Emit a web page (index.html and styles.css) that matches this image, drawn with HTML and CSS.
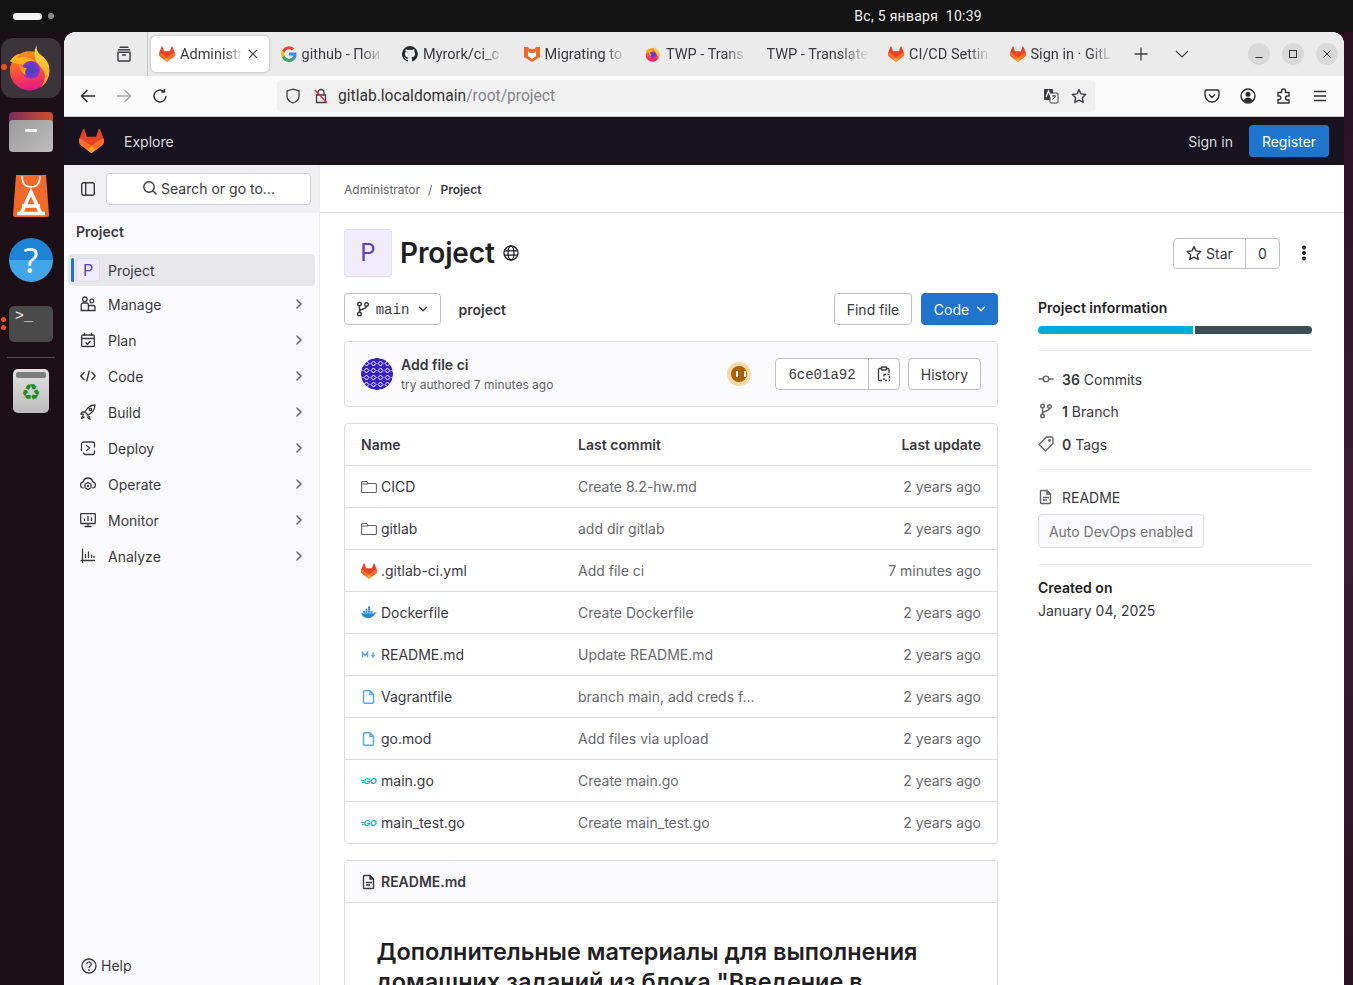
FILE: index.html
```html
<!DOCTYPE html>
<html lang="en">
<head>
<meta charset="utf-8">
<title>Project</title>
<link rel="stylesheet" href="styles.css">
</head>
<body>
<svg class="defs" aria-hidden="true">
  <symbol id="tanuki" viewBox="0 0 25 24">
    <path fill="#E24329" d="m24.507 9.5-.034-.09L21.082.562a.896.896 0 0 0-1.694.091l-2.29 7.01H7.825L5.535.653a.898.898 0 0 0-1.694-.09L.451 9.411.416 9.5a6.297 6.297 0 0 0 2.09 7.278l.012.01.03.022 5.16 3.867 2.56 1.935 1.554 1.176a1.051 1.051 0 0 0 1.268 0l1.555-1.176 2.56-1.935 5.197-3.89.014-.01A6.297 6.297 0 0 0 24.507 9.5Z"/>
    <path fill="#FC6D26" d="m24.507 9.5-.034-.09a11.44 11.44 0 0 0-4.56 2.051l-7.447 5.632 4.742 3.584 5.197-3.89.014-.01A6.297 6.297 0 0 0 24.507 9.5Z"/>
    <path fill="#FCA326" d="m7.707 20.677 2.56 1.935 1.555 1.176a1.051 1.051 0 0 0 1.268 0l1.555-1.176 2.56-1.935-4.743-3.584-4.755 3.584Z"/>
    <path fill="#FC6D26" d="M5.01 11.461a11.43 11.43 0 0 0-4.56-2.05L.416 9.5a6.297 6.297 0 0 0 2.09 7.278l.012.01.03.022 5.16 3.867 4.745-3.584-7.444-5.632Z"/>
  </symbol>
  <symbol id="firefox" viewBox="0 0 48 48">
    <linearGradient id="ffring" x1="0.35" y1="0" x2="0.55" y2="1"><stop offset="0" stop-color="#FF9416"/><stop offset=".5" stop-color="#FF4F3A"/><stop offset="1" stop-color="#E3148A"/></linearGradient>
    <linearGradient id="ffflame" x1="0.5" y1="0" x2="0.5" y2="1"><stop offset="0" stop-color="#FFE14A"/><stop offset="1" stop-color="#FF9A1F"/></linearGradient>
    <radialGradient id="ffcore"><stop offset="0" stop-color="#4840BC"/><stop offset=".7" stop-color="#6A3BC6"/><stop offset="1" stop-color="#A32FC0"/></radialGradient>
    <circle cx="22.500" cy="27" r="20.500" fill="url(#ffring)"/>
    <path fill="url(#ffflame)" d="M30 0c-1 6 2 9 6 12 6 5 8 10 7 18-1 6-4 11-9 14 4-5 6-11 3-17-3-5-8-8-9-14-1-5 0-9 2-13z"/>
    <path fill="#FFB11F" d="M2 17c2-4 6-7 10-8l-2 5c3-1 7-2 11-1 3 1 6 3 8 5-6-1-11 0-14 3-4-1-9-2-13-4z"/>
    <circle cx="24" cy="26" r="9.500" fill="url(#ffcore)"/>
    <path fill="#FF9A1F" d="M12 18c1 5 4 6 8 6-2 2-3 5-1 8-5-3-8-8-7-14z"/>
  </symbol>
  <symbol id="file-blue" viewBox="0 0 16 16"><path fill="none" stroke="#5aa9f0" stroke-width="1.500" d="M3.500 1.750h5.500l3.500 3.500v8a1 1 0 0 1-1 1h-8a1 1 0 0 1-1-1v-10.500a1 1 0 0 1 1-1zM9 1.750v3.500h3.500"/></symbol>
  <symbol id="folder" viewBox="0 0 16 16"><path fill="none" stroke="currentColor" stroke-width="1.100" d="M.6 3.500a1 1 0 0 1 1-1h4l1.500 2h7.300a1 1 0 0 1 1 1v7a1 1 0 0 1-1 1H1.600a1 1 0 0 1-1-1zM.6 5h6.500"/></symbol>
  <symbol id="chev" viewBox="0 0 16 16"><path fill="none" stroke="currentColor" stroke-width="1.500" stroke-linecap="round" stroke-linejoin="round" d="m6 4 4 4-4 4"/></symbol>
  <symbol id="chevd" viewBox="0 0 16 16"><path fill="none" stroke="currentColor" stroke-width="1.500" stroke-linecap="round" stroke-linejoin="round" d="m4 6 4 4 4-4"/></symbol>
  <symbol id="branch" viewBox="0 0 16 16"><g fill="none" stroke="currentColor" stroke-width="1.400"><circle cx="4.500" cy="3" r="1.800"/><circle cx="4.500" cy="13" r="1.800"/><circle cx="11.500" cy="3.500" r="1.800"/><path d="M4.500 5v6M11.500 5.500c0 3-7 2-7 5"/></g></symbol>
  <symbol id="doc" viewBox="0 0 16 16"><path fill="none" stroke="currentColor" stroke-width="1.400" d="M3.500 1.500h5.500l3.500 3.500v8.500a1 1 0 0 1-1 1h-8a1 1 0 0 1-1-1v-11a1 1 0 0 1 1-1zM9 1.500V5h3.500M5 8.500h6M5 11h4"/></symbol>
  <symbol id="star" viewBox="0 0 16 16"><path fill="none" stroke="currentColor" stroke-width="1.400" stroke-linejoin="round" d="m8 1.600 2 4.300 4.700.6-3.400 3.200.9 4.700L8 12.100l-4.200 2.300.9-4.700L1.300 6.500 6 5.900z"/></symbol>
</svg>

<header class="topbar">
  <span class="pill"></span><span class="dot"></span>
  <span class="clock">Вс, 5 января&nbsp;&nbsp;10:39</span>
</header>

<nav class="dock">
  <div class="dock-item active-app">
    <span class="run-dot"></span>
    <svg class="dock-ff"><use href="#firefox"/></svg>
  </div>
  <div class="dock-item">
    <div class="dock-folder"><span class="folder-tab"></span><span class="folder-front"><span class="folder-slot"></span></span></div>
  </div>
  <div class="dock-item">
    <svg class="dock-store" viewBox="0 0 36 42">
      <path fill="#F0692A" d="M3 0h30l3 40a2 2 0 0 1-2 2H2a2 2 0 0 1-2-2z"/>
      <path fill="none" stroke="#fff" stroke-width="1.600" d="M9 1c0 8 4 11 9 11s9-3 9-11"/>
      <path fill="none" stroke="#fff" stroke-width="3.600" d="M8 39 18 17l10 22M9 31h18M4 38.500h28"/>
    </svg>
  </div>
  <div class="dock-item"><span class="dock-help">?</span></div>
  <div class="dock-item">
    <span class="run-dots"><span class="run-dot-s"></span><span class="run-dot-s"></span></span>
    <span class="dock-term">&gt;_</span>
  </div>
  <div class="dock-sep"></div>
  <div class="dock-item">
    <div class="dock-trash"><span class="trash-lid"></span><span class="trash-sym">♻</span></div>
  </div>
</nav>

<div class="window">
  <div class="tabbar">
    <span class="view-btn">
      <svg class="i16" viewBox="0 0 16 16"><path fill="none" stroke="#3d3d42" stroke-width="1.400" d="M3.500 1.200h9M1.800 3.700h12.400M2 6.200h12v8.200a.6.6 0 0 1-.6.6H2.600a.6.6 0 0 1-.6-.6zM6 9h4"/></svg>
    </span>
    <span class="tab-sep"></span>
    <div class="tab tab-active">
      <svg class="i16"><use href="#tanuki"/></svg>
      <span class="tab-label tab-label-short">Administr</span>
      <svg class="tab-close" viewBox="0 0 10 10"><path stroke="#444" stroke-width="1.100" d="m1 1 8 8M9 1 1 9"/></svg>
    </div>
    <div class="tab">
      <svg class="i16" viewBox="0 0 16 16"><path fill="#4285F4" d="M15.500 8.200c0-.6 0-1.100-.1-1.600H8v3h4.300c-.2 1-.7 1.800-1.600 2.400v2h2.500c1.500-1.400 2.300-3.400 2.300-5.800z"/><path fill="#34A853" d="M8 16c2.100 0 3.900-.7 5.200-1.900l-2.500-2c-.7.500-1.600.8-2.700.8-2.100 0-3.800-1.400-4.500-3.300H1v2C2.400 14.300 5 16 8 16z"/><path fill="#FBBC05" d="M3.500 9.600c-.3-1-.3-2.100 0-3.200v-2H1a8 8 0 0 0 0 7.200z"/><path fill="#EA4335" d="M8 3.200c1.200 0 2.200.4 3 1.200l2.200-2.200A8 8 0 0 0 1 4.400l2.500 2C4.200 4.500 5.900 3.200 8 3.200z"/></svg>
      <span class="tab-label">github - Пои</span>
    </div>
    <div class="tab">
      <svg class="i16" viewBox="0 0 16 16"><path fill="#24292f" d="M8 0a8 8 0 0 0-2.500 15.600c.4.100.5-.2.500-.4v-1.400c-2.200.5-2.700-1-2.700-1-.4-.9-.9-1.200-.9-1.200-.7-.5.100-.5.100-.5.800.1 1.200.8 1.200.8.700 1.200 1.900.9 2.300.7.100-.5.300-.9.500-1.100-1.800-.2-3.600-.9-3.600-4 0-.9.300-1.600.8-2.100-.1-.2-.4-1 .1-2.100 0 0 .7-.2 2.200.8a7.600 7.600 0 0 1 4 0c1.500-1 2.200-.8 2.200-.8.400 1.100.2 1.900.1 2.100.5.600.8 1.300.8 2.100 0 3.100-1.900 3.700-3.700 3.900.3.300.6.800.6 1.500v2.200c0 .2.100.5.600.4A8 8 0 0 0 8 0z"/></svg>
      <span class="tab-label">Myrork/ci_c</span>
    </div>
    <div class="tab">
      <svg class="i16" viewBox="0 0 16 16"><path fill="#F0692A" d="M0 1h4l1.500 2h5L12 1h4v10l-8 5-8-5z"/><path fill="#fff" d="M4 5l2 2h4l2-2v5l-4 3-4-3z"/></svg>
      <span class="tab-label">Migrating to</span>
    </div>
    <div class="tab">
      <svg class="i16"><use href="#firefox"/></svg>
      <span class="tab-label">TWP - Trans</span>
    </div>
    <div class="tab">
      <span class="tab-label tab-label-wide">TWP - Translate</span>
    </div>
    <div class="tab">
      <svg class="i16"><use href="#tanuki"/></svg>
      <span class="tab-label">CI/CD Settin</span>
    </div>
    <div class="tab">
      <svg class="i16"><use href="#tanuki"/></svg>
      <span class="tab-label">Sign in · GitL</span>
    </div>
    <span class="tb-btn tb-plus"><svg class="i16" viewBox="0 0 16 16"><path stroke="#3d3d42" stroke-width="1.300" d="M8 1.500v13M1.500 8h13"/></svg></span>
    <span class="tb-btn tb-chevron"><svg class="i16" viewBox="0 0 16 16"><path fill="none" stroke="#3d3d42" stroke-width="1.200" d="m2 5 6 6 6-6"/></svg></span>
    <div class="win-btns">
      <span class="win-btn"><svg class="i10" viewBox="0 0 10 10"><path stroke="#333" stroke-width="1" d="M1.500 8.500h7"/></svg></span>
      <span class="win-btn"><svg class="i10" viewBox="0 0 10 10"><rect x="1.500" y="1.500" width="7" height="7" fill="none" stroke="#333" stroke-width="1"/></svg></span>
      <span class="win-btn"><svg class="i10" viewBox="0 0 10 10"><path stroke="#333" stroke-width="1" d="m1.500 1.500 7 7M8.500 1.500l-7 7"/></svg></span>
    </div>
  </div>

  <div class="navbar">
    <span class="nav-btn"><svg class="i16" viewBox="0 0 16 16"><path fill="none" stroke="#2f2f33" stroke-width="1.400" d="M15 8H1.500M7.500 2 1.500 8l6 6"/></svg></span>
    <span class="nav-btn"><svg class="i16" viewBox="0 0 16 16"><path fill="none" stroke="#a8a8ad" stroke-width="1.400" d="M1 8h13.500M8.500 2l6 6-6 6"/></svg></span>
    <span class="nav-btn"><svg class="i16" viewBox="0 0 16 16"><path fill="none" stroke="#2f2f33" stroke-width="1.400" d="M14 8a6 6 0 1 1-2-4.500M12.500 .8v3.200H9.300"/></svg></span>
    <div class="urlbar">
      <svg class="i16" viewBox="0 0 16 16"><path fill="none" stroke="#3d3d42" stroke-width="1.300" d="M8 1.200 14 3v5c0 3.500-2.500 5.800-6 7-3.500-1.200-6-3.500-6-7V3z"/></svg>
      <svg class="i16" viewBox="0 0 16 16"><path fill="none" stroke="#3d3d42" stroke-width="1.300" d="M3.500 7h9v7.500h-9zM5 7V4.500a3 3 0 0 1 6 0V7"/><path stroke="#e22850" stroke-width="1.500" d="m2 2 12 13"/></svg>
      <span class="url"><span class="url-host">gitlab.localdomain</span>/root/project</span>
      <svg class="i16 url-end" viewBox="0 0 16 16"><rect x="1" y="1" width="9" height="11" rx="1" fill="#3d3d42"/><rect x="7" y="5" width="8" height="10" rx="1" fill="#fff" stroke="#3d3d42"/><path stroke="#fff" stroke-width="1.200" fill="none" d="m3 9 2.500-6L8 9"/><path stroke="#3d3d42" fill="none" d="M9 8h4M11 7v1M12.500 8c-.5 2-2 3-3.500 3.500"/></svg>
      <svg class="i16 url-star"><use href="#star"/></svg>
    </div>
    <div class="nav-right">
      <span class="nav-btn"><svg class="i16" viewBox="0 0 16 16"><path fill="none" stroke="#2f2f33" stroke-width="1.400" d="M2.500 2h11A1.500 1.500 0 0 1 15 3.500V7a7 7 0 0 1-14 0V3.500A1.500 1.500 0 0 1 2.500 2zM5 6.500l3 3 3-3"/></svg></span>
      <span class="nav-btn"><svg class="i16" viewBox="0 0 16 16"><circle cx="8" cy="8" r="7" fill="none" stroke="#2f2f33" stroke-width="1.400"/><circle cx="8" cy="6.200" r="2.500" fill="#2f2f33"/><path fill="#2f2f33" d="M3.500 12.500c1-2 2.800-3 4.500-3s3.500 1 4.500 3A6 6 0 0 1 8 14.500a6 6 0 0 1-4.500-2z"/></svg></span>
      <span class="nav-btn"><svg class="i16" viewBox="0 0 16 16"><path fill="none" stroke="#2f2f33" stroke-width="1.400" d="M2 4.500h3.500V3a2 2 0 0 1 4 0v1.500H13V8h-1.500a2 2 0 0 0 0 4H13v3H2v-3.500h1.500a1.800 1.800 0 0 0 0-3.500H2z"/></svg></span>
      <span class="nav-btn"><svg class="i16" viewBox="0 0 16 16"><path stroke="#2f2f33" stroke-width="1.300" d="M2 3.500h12M2 8h12M2 12.500h12"/></svg></span>
    </div>
  </div>

  <div class="gl-header">
    <svg class="gl-logo"><use href="#tanuki"/></svg>
    <span class="gl-explore">Explore</span>
    <span class="gl-signin">Sign in</span>
    <span class="gl-register">Register</span>
  </div>

  <div class="gl-body">
    <aside class="sidebar">
      <div class="side-search">
        <svg class="i16 c-dark" viewBox="0 0 16 16"><rect x="1.700" y="1.700" width="12.600" height="12.600" rx="2" fill="none" stroke="currentColor" stroke-width="1.400"/><path stroke="currentColor" stroke-width="1.400" d="M5.700 2v12"/></svg>
        <div class="search-box">
          <svg class="i16 c-dark" viewBox="0 0 16 16"><circle cx="7" cy="7" r="5.200" fill="none" stroke="currentColor" stroke-width="1.400"/><path stroke="currentColor" stroke-width="1.400" d="m11 11 3.500 3.500"/></svg>
          <span>Search or go to...</span>
        </div>
      </div>
      <div class="side-title">Project</div>
      <ul class="side-list">
        <li class="side-item side-active"><span class="side-avatar">P</span><span>Project</span></li>
        <li class="side-item">
          <svg class="i16" viewBox="0 0 16 16"><g fill="none" stroke="currentColor" stroke-width="1.300"><circle cx="4.800" cy="3.300" r="2.300"/><circle cx="11.800" cy="5" r="1.900"/><path d="M1.200 14.500V9a2 2 0 0 1 2-2h3.200a2 2 0 0 1 2 2v5.500zM8.400 9.500h5.100a1.500 1.500 0 0 1 1.500 1.500v3.500H8.400"/></g></svg>
          <span>Manage</span><svg class="side-chev"><use href="#chev"/></svg>
        </li>
        <li class="side-item">
          <svg class="i16" viewBox="0 0 16 16"><g fill="none" stroke="currentColor" stroke-width="1.300"><rect x="1.700" y="3" width="12.600" height="11.500" rx="1"/><path d="M1.700 6.500h12.600M4.500 .8v3.200M11.500 .8v3.200M5.500 10.500l2 1.800 3-3.300"/></g></svg>
          <span>Plan</span><svg class="side-chev"><use href="#chev"/></svg>
        </li>
        <li class="side-item">
          <svg class="i16" viewBox="0 0 16 16"><path fill="none" stroke="currentColor" stroke-width="1.400" stroke-linejoin="round" d="M4.500 4 .8 8l3.700 4M11.500 4l3.700 4-3.700 4M9.500 2.500l-3 11"/></svg>
          <span>Code</span><svg class="side-chev"><use href="#chev"/></svg>
        </li>
        <li class="side-item">
          <svg class="i16" viewBox="0 0 16 16"><g fill="none" stroke="currentColor" stroke-width="1.300" stroke-linejoin="round"><path d="M15 1c-5 .2-8 3-10 7l3 3c4-2 6.800-5 7-10zM5 8H2L.8 10l3.200.5M8 11v3l2 1.200-.5-3.200"/><circle cx="10.500" cy="5.500" r="1.200"/><path d="M3.500 11.500C2 12.500 1.500 14 1.500 14.500s2-.5 3-2"/></g></svg>
          <span>Build</span><svg class="side-chev"><use href="#chev"/></svg>
        </li>
        <li class="side-item">
          <svg class="i16" viewBox="0 0 16 16"><g fill="none" stroke="currentColor" stroke-width="1.300" stroke-linecap="round" stroke-linejoin="round"><path d="M1.500 10.500V4a2 2 0 0 1 2-2h9a2 2 0 0 1 2 2v3M14.500 11v1.500a2 2 0 0 1-2 2H5.500a2 2 0 0 1-2-1.500"/><path d="m6.500 5.500 3 2.500-3 2.500"/></g></svg>
          <span>Deploy</span><svg class="side-chev"><use href="#chev"/></svg>
        </li>
        <li class="side-item">
          <svg class="i16" viewBox="0 0 16 16"><g fill="none" stroke="currentColor" stroke-width="1.300" stroke-linejoin="round"><path d="M3.500 12C1 12 .5 10 .5 9c0-1.500 1-2.500 2.500-2.800C3.500 3.500 5.500 2 8 2s4.500 1.500 5 4.200C14.500 6.500 15.500 7.500 15.500 9c0 1-.5 3-3 3"/><path d="m8 6.500 3 1.800v3.400L8 13.500l-3-1.800V8.300z"/></g><circle cx="8" cy="10" r="1.200" fill="currentColor"/></svg>
          <span>Operate</span><svg class="side-chev"><use href="#chev"/></svg>
        </li>
        <li class="side-item">
          <svg class="i16" viewBox="0 0 16 16"><g fill="none" stroke="currentColor" stroke-width="1.300"><rect x=".7" y="1.700" width="14.600" height="9.800" rx=".5"/><path d="M8 11.500v3M4.500 14.500h7M4.500 9V6.500M8 9V4M11.500 9V5.500"/></g></svg>
          <span>Monitor</span><svg class="side-chev"><use href="#chev"/></svg>
        </li>
        <li class="side-item">
          <svg class="i16" viewBox="0 0 16 16"><path fill="none" stroke="currentColor" stroke-width="1.300" d="M2.500 .8V15M.5 12.500H15M5.500 10V6M8.500 10V3.500M11.500 10V6.500M14 10V8"/></svg>
          <span>Analyze</span><svg class="side-chev"><use href="#chev"/></svg>
        </li>
      </ul>
      <div class="side-help">
        <svg class="i16 c-dark" viewBox="0 0 16 16"><circle cx="8" cy="8" r="7" fill="none" stroke="currentColor" stroke-width="1.300"/><path fill="none" stroke="currentColor" stroke-width="1.300" d="M5.800 6.200a2.200 2.200 0 1 1 3.400 1.800C8.300 8.600 8 9 8 10"/><circle cx="8" cy="12" r=".9" fill="currentColor"/></svg>
        <span>Help</span>
      </div>
    </aside>

    <main class="main">
      <div class="crumbs"><span>Administrator</span><span class="crumb-sep">/</span><span class="crumb-cur">Project</span></div>
      <div class="content">
        <div class="proj-head">
          <span class="proj-avatar">P</span>
          <h1 class="proj-title">Project</h1>
          <svg class="i16 c-title" viewBox="0 0 16 16"><g fill="none" stroke="currentColor" stroke-width="1.300"><circle cx="8" cy="8" r="7"/><ellipse cx="8" cy="8" rx="3" ry="7"/><path d="M1.200 5.800h13.600M1.200 10.200h13.600"/></g></svg>
          <div class="star-group">
            <span class="star-btn"><svg class="i16 c-dark"><use href="#star"/></svg>Star</span>
            <span class="star-count">0</span>
          </div>
          <svg class="kebab" viewBox="0 0 16 16"><circle cx="8" cy="2.500" r="2" fill="#1f1e24"/><circle cx="8" cy="8" r="2" fill="#1f1e24"/><circle cx="8" cy="13.500" r="2" fill="#1f1e24"/></svg>
        </div>

        <div class="columns">
          <div class="col-left">
            <div class="ref-row">
              <span class="btn branch-btn"><svg class="i16 c-dark"><use href="#branch"/></svg><span class="mono">main</span><svg class="i16 c-dark small-chev"><use href="#chevd"/></svg></span>
              <strong class="ref-name">project</strong>
              <span class="btn find-btn">Find file</span>
              <span class="btn code-btn">Code<svg class="i16 small-chev"><use href="#chevd"/></svg></span>
            </div>

            <div class="commit-box">
              <svg class="commit-avatar" viewBox="0 0 32 32">
                <defs><pattern id="identicon" x="2" y="2" width="7" height="7" patternUnits="userSpaceOnUse"><rect width="7" height="7" fill="#3a1fbf"/><path d="M3.500 1 6 3.500 3.500 6 1 3.500z" fill="none" stroke="#fff" stroke-width="1"/><circle cx="3.500" cy="3.500" r=".7" fill="#3a1fbf"/></pattern></defs>
                <circle cx="16" cy="16" r="16" fill="url(#identicon)"/>
              </svg>
              <div class="commit-text">
                <div class="commit-title">Add file ci</div>
                <div class="commit-sub">try authored 7 minutes ago</div>
              </div>
              <span class="status"><span class="status-bars"></span></span>
              <div class="sha-group">
                <span class="sha mono">6ce01a92</span>
                <span class="sha-copy"><svg class="i16 c-dark" viewBox="0 0 16 16"><g fill="none" stroke="currentColor" stroke-width="1.300"><path d="M5 2.500H3.500a1 1 0 0 0-1 1v10a1 1 0 0 0 1 1H6M11 2.500h1a1 1 0 0 1 1 1V7"/><rect x="5.500" y="1" width="5" height="3" rx=".5"/><path stroke-dasharray="2 1.500" d="M8 8.500h5.500v6H8z"/></g></svg></span>
              </div>
              <span class="btn history-btn">History</span>
            </div>

            <div class="file-box">
              <table class="files">
                <colgroup><col class="col-name"><col class="col-commit"><col></colgroup>
                <thead><tr><th>Name</th><th>Last commit</th><th class="right">Last update</th></tr></thead>
                <tbody>
                  <tr><td><span class="fname"><svg class="i16 c-muted"><use href="#folder"/></svg>CICD</span></td><td class="muted">Create 8.2-hw.md</td><td class="muted right">2 years ago</td></tr>
                  <tr><td><span class="fname"><svg class="i16 c-muted"><use href="#folder"/></svg>gitlab</span></td><td class="muted">add dir gitlab</td><td class="muted right">2 years ago</td></tr>
                  <tr><td><span class="fname"><svg class="i16"><use href="#tanuki"/></svg>.gitlab-ci.yml</span></td><td class="muted">Add file ci</td><td class="muted right">7 minutes ago</td></tr>
                  <tr><td><span class="fname"><svg class="i16" viewBox="0 0 16 16"><path fill="#1f88d0" d="M.3 8.300h12c.6 0 1.200-.6 1.500-1 .6.300 1.300.3 2 .1-.5 1-1.300 1.300-2 1.400C13 11.500 10.500 13 7 13 3 13 1 11 .3 8.300z"/><path fill="#1f88d0" d="M2 6h2v1.800H2zM4.500 6h2v1.800h-2zM7 6h2v1.800H7zM9.500 6h2v1.800h-2zM4.500 3.800h2v1.800h-2zM7 3.800h2v1.800H7zM7 1.600h2v1.800H7z"/></svg>Dockerfile</span></td><td class="muted">Create Dockerfile</td><td class="muted right">2 years ago</td></tr>
                  <tr><td><span class="fname"><svg class="i16" viewBox="0 0 16 16"><path fill="none" stroke="#5aa9f0" stroke-width="1.500" d="M1.500 10.500v-5l2.500 3 2.500-3v5"/><path fill="#5aa9f0" d="M9.500 8h1.800V5.500h1.400V8h1.800L12 11z"/></svg>README.md</span></td><td class="muted">Update README.md</td><td class="muted right">2 years ago</td></tr>
                  <tr><td><span class="fname"><svg class="i16"><use href="#file-blue"/></svg>Vagrantfile</span></td><td class="muted">branch main, add creds f...</td><td class="muted right">2 years ago</td></tr>
                  <tr><td><span class="fname"><svg class="i16"><use href="#file-blue"/></svg>go.mod</span></td><td class="muted">Add files via upload</td><td class="muted right">2 years ago</td></tr>
                  <tr><td><span class="fname"><svg class="i16" viewBox="0 0 16 16"><path stroke="#00acc1" stroke-width=".9" d="M0 7.500h3M1 9.500h2"/><text class="go-text" x="2.500" y="11">GO</text></svg>main.go</span></td><td class="muted">Create main.go</td><td class="muted right">2 years ago</td></tr>
                  <tr><td><span class="fname"><svg class="i16" viewBox="0 0 16 16"><path stroke="#00acc1" stroke-width=".9" d="M0 7.500h3M1 9.500h2"/><text class="go-text" x="2.500" y="11">GO</text></svg>main_test.go</span></td><td class="muted">Create main_test.go</td><td class="muted right">2 years ago</td></tr>
                </tbody>
              </table>
            </div>

            <section class="readme">
              <div class="readme-head"><svg class="i16 c-dark"><use href="#doc"/></svg><strong>README.md</strong></div>
              <div class="readme-body">
                <h2>Дополнительные материалы для выполнения домашних заданий из блока "Введение в DevOps"</h2>
              </div>
            </section>
          </div>

          <aside class="col-right">
            <h3 class="info-title">Project information</h3>
            <div class="lang-bar"><span class="lang-a"></span><span class="lang-b"></span></div>
            <hr class="rule rule-first">
            <div class="stat stat-first"><svg class="i16 c-muted" viewBox="0 0 16 16"><g fill="none" stroke="currentColor" stroke-width="1.300"><circle cx="8" cy="8" r="2.800"/><path d="M.5 8h4.700M10.800 8h4.700"/></g></svg><span><b>36</b> Commits</span></div>
            <div class="stat"><svg class="i16 c-muted"><use href="#branch"/></svg><span><b>1</b> Branch</span></div>
            <div class="stat stat-last"><svg class="i16 c-muted" viewBox="0 0 16 16"><g fill="none" stroke="currentColor" stroke-width="1.300" stroke-linejoin="round"><path d="M15 2.500v5L7.500 15 1 8.500 8.500 1H13.500a1.500 1.500 0 0 1 1.500 1.500z"/><circle cx="11.500" cy="4.500" r=".8"/></g></svg><span><b>0</b> Tags</span></div>
            <hr class="rule rule-mid">
            <div class="stat readme-link"><svg class="i16 c-muted"><use href="#doc"/></svg><span>README</span></div>
            <span class="devops">Auto DevOps enabled</span>
            <hr class="rule rule-low">
            <div class="created-label">Created on</div>
            <div class="created-date">January 04, 2025</div>
          </aside>
        </div>
      </div>
    </main>
  </div>
</div>
<div class="wall"></div>
</body>
</html>
```
FILE: styles.css
```css
* { box-sizing: border-box; }
html, body { height: 100%; }
body {
  margin: 0;
  height: 985px;
  overflow: hidden;
  display: grid;
  grid-template-columns: 64px 1280px 9px;
  grid-template-rows: 32px 953px;
  background: #1a0d14;
  font-family: Inter, "Noto Sans", sans-serif;
  font-size: 14px;
  color: #3a383f;
}
.defs { width: 0; height: 0; position: absolute; }
.i16 { width: 16px; height: 16px; flex: none; display: block; }
.i10 { width: 10px; height: 10px; display: block; }
.c-dark { color: #3a383f; }
.c-muted { color: #626168; }
.c-title { color: #1f1e24; }
.mono { font-family: "Liberation Mono", monospace; }
.go-text { font-family: "Liberation Sans", sans-serif; font-size: 8.500px; font-weight: 700; font-style: italic; fill: #00acc1; }

/* top bar */
.topbar {
  grid-column: 1 / -1;
  background: #131313;
  display: flex;
  align-items: center;
  padding-left: 13px;
  font-family: Roboto, sans-serif;
}
.pill { width: 29px; height: 7px; border-radius: 4px; background: #f4f4f4; }
.dot { width: 6px; height: 6px; border-radius: 50%; background: #8a8a8a; margin-left: 6px; }
.clock { margin-left: auto; margin-right: 371px; color: #f0f0f0; font-size: 14px; letter-spacing: .28px; white-space: nowrap; }

/* dock */
.dock {
  background: #1c0f16;
  display: flex;
  flex-direction: column;
  align-items: center;
  padding: 6px 2px 0 0;
}
.dock-item {
  width: 60px;
  height: 60px;
  margin-bottom: 4px;
  display: flex;
  align-items: center;
  justify-content: center;
  position: relative;
  border-radius: 12px;
  flex: none;
}
.active-app { background: #3b343a; }
.dock-ff { width: 46px; height: 46px; }
.run-dot { position: absolute; left: 0; top: 26px; width: 6px; height: 6px; border-radius: 50%; background: #e95420; }
.dock-folder { width: 44px; height: 40px; position: relative; }
.folder-tab { position: absolute; left: 0; right: 0; top: 0; height: 20px; border-radius: 4px 4px 0 0; background: linear-gradient(90deg, #7a2c5c, #d0512c); }
.folder-front { position: absolute; left: 0; right: 0; top: 8px; bottom: 0; border-radius: 4px; background: linear-gradient(135deg, #9b9b9b, #bdbdbd); display: flex; justify-content: center; }
.folder-slot { width: 12px; height: 3px; background: #f2f2f2; margin-top: 9px; border-radius: 1px; }
.dock-store { width: 36px; height: 42px; }
.dock-help {
  width: 44px; height: 44px; border-radius: 50%;
  background: linear-gradient(#1d83d6 50%, #41a5e9 50%);
  color: #fff; font-family: "Noto Sans", sans-serif; font-size: 34px; line-height: 44px; text-align: center;
}
.run-dots { position: absolute; left: 0; top: 23px; display: flex; flex-direction: column; gap: 3px; }
.run-dot-s { width: 5px; height: 5px; border-radius: 50%; background: #e95420; display: block; }
.dock-term {
  width: 44px; height: 36px; border-radius: 5px; background: #4a4a4a;
  color: #fff; font-family: "Liberation Mono", monospace; font-size: 15px; line-height: 18px; padding: 2px 0 0 6px;
}
.dock-sep { width: 48px; height: 1px; background: #55494f; margin: -1px 0 3px; flex: none; }
.dock-trash {
  width: 36px; height: 44px; border-radius: 5px; background: linear-gradient(#e2e2e2, #bcbcbc);
  padding-top: 3px; display: flex; flex-direction: column; align-items: center;
}
.trash-lid { width: 30px; height: 6px; border-radius: 2px; background: #7d7d7d; }
.trash-sym { color: #228a22; font-family: "DejaVu Sans", sans-serif; font-size: 22px; line-height: 30px; }

/* window */
.window {
  background: #fff;
  border-radius: 12px 12px 0 0;
  overflow: hidden;
  display: flex;
  flex-direction: column;
  min-width: 0;
}
.wall { background: linear-gradient(#2c1020, #3d1c30 50%, #2f1222); }

.tabbar {
  height: 44px;
  background: #ebebeb;
  display: flex;
  align-items: center;
  padding-left: 44px;
  font-family: Roboto, sans-serif;
  font-size: 14.5px;
  color: #3a3a3f;
  flex: none;
}
.view-btn { width: 32px; display: flex; justify-content: center; }
.tab-sep { width: 1px; height: 44px; background: #c9c9c9; margin-left: 7px; margin-right: 1px; }
.tab {
  width: 117.5px;
  height: 36px;
  margin: 0 2px;
  padding-left: 8px;
  display: flex;
  align-items: center;
  gap: 5px;
  border-radius: 5px;
  flex: none;
}
.tab-active { background: #fff; box-shadow: 0 0 3px rgba(0, 0, 0, .3); }
.tab-label {
  width: 82px;
  overflow: hidden;
  white-space: nowrap;
  -webkit-mask-image: linear-gradient(to right, #000 72%, transparent);
  mask-image: linear-gradient(to right, #000 72%, transparent);
}
.tab-label-short { width: 63px; }
.tab-label-wide { width: 102px; }
.tab-close { width: 10px; height: 10px; flex: none; }
.tb-btn { width: 32px; display: flex; justify-content: center; }
.tb-plus { margin-left: 4px; }
.tb-chevron { margin-left: 9px; }
.win-btns { margin-left: auto; padding-right: 6px; display: flex; gap: 12px; }
.win-btn { width: 22px; height: 22px; border-radius: 50%; background: #d9d9d9; display: flex; align-items: center; justify-content: center; }

.navbar {
  height: 41px;
  flex: none;
  background: #fbfbfb;
  border-bottom: 1px solid #c9c9c9;
  display: flex;
  align-items: center;
  padding-left: 6px;
  padding-right: 6px;
}
.nav-btn { width: 36px; display: flex; justify-content: center; }
.urlbar {
  margin-left: 99px;
  width: 818px;
  height: 32px;
  border-radius: 4px;
  background: #f0f0f0;
  display: flex;
  align-items: center;
  padding: 0 8px;
  gap: 12px;
}
.url { font-family: Roboto, sans-serif; font-size: 15.6px; color: #85858a; margin-left: -3px; }
.url-host { color: #333; }
.url-end { margin-left: auto; }
.url-star { color: #3d3d42; }
.nav-right { margin-left: auto; display: flex; }

.gl-header {
  height: 48px;
  flex: none;
  background: #171321;
  color: #dcdcde;
  display: flex;
  align-items: center;
  padding: 0 15px 0 15px;
}
.gl-logo { width: 25px; height: 24px; }
.gl-explore { margin-left: 20px; }
.gl-signin { margin-left: auto; margin-right: 16px; }
.gl-register { width: 80px; height: 32px; line-height: 33px; text-align: center; background: #1f75cb; color: #fff; border-radius: 4px; }

.gl-body { flex: 1; display: flex; min-height: 0; }

/* sidebar */
.sidebar {
  width: 256px;
  flex: none;
  background: #fbfafd;
  border-right: 1px solid #ececef;
  display: flex;
  flex-direction: column;
}
.side-search {
  height: 48px;
  background: #f0f0f2;
  display: flex;
  align-items: center;
  padding: 0 8px 0 16px;
  gap: 10px;
  flex: none;
}
.search-box {
  flex: 1;
  height: 32px;
  background: #fff;
  border: 1px solid #d1d0d3;
  border-radius: 4px;
  display: flex;
  align-items: center;
  justify-content: center;
  gap: 3px;
  padding-bottom: 2px;
}
.side-title { padding: 9px 12px 12px; line-height: 20px; font-weight: 600; }
.side-list { list-style: none; margin: 0; padding: 0; }
.side-item {
  height: 36px;
  margin: 0 4px;
  padding: 0 8px 0 12px;
  display: flex;
  align-items: center;
  gap: 12px;
  border-radius: 4px;
  position: relative;
}
.side-active {
  height: 32px;
  background: #e7e6ea;
  padding-left: 8px;
  gap: 8px;
}
.side-active::before {
  content: "";
  position: absolute;
  left: 3px;
  top: 4px;
  bottom: 4px;
  width: 3px;
  border-radius: 2px;
  background: #1f75cb;
}
.side-avatar {
  width: 24px;
  height: 24px;
  border-radius: 4px;
  background: #f1ecfb;
  box-shadow: inset 0 0 0 1px #dcdae6;
  color: #5943b6;
  font-size: 16px;
  line-height: 24px;
  text-align: center;
}
.side-chev { width: 16px; height: 16px; margin-left: auto; color: #626168; }
.side-help {
  margin-top: auto;
  padding: 0 0 8px 17px;
  height: 30px;
  display: flex;
  align-items: center;
  gap: 4px;
  line-height: 20px;
}

/* main */
.main { flex: 1; min-width: 0; overflow: hidden; background: #fff; }
.crumbs {
  height: 48px;
  border-bottom: 1px solid #dcdcde;
  padding: 2px 0 0 24px;
  display: flex;
  align-items: center;
  font-size: 12px;
  color: #626168;
}
.crumb-sep { margin: 0 8px; }
.crumb-cur { font-weight: 600; color: #3a383f; }
.content { padding: 16px 32px 0 24px; }

.proj-head { height: 48px; display: flex; align-items: center; }
.proj-avatar {
  width: 48px;
  height: 48px;
  border-radius: 4px;
  background: #f1ecfb;
  box-shadow: inset 0 0 0 1px #e4e1ee;
  color: #5943b6;
  font-size: 24px;
  line-height: 48px;
  text-align: center;
}
.proj-title { margin: 0 8px; font-size: 28px; font-weight: 600; color: #1f1e24; letter-spacing: -.15px; }
.star-group { margin-left: auto; display: flex; height: 31px; border: 1px solid #bfbfc3; border-radius: 4px; }
.star-btn { width: 72px; display: flex; align-items: center; justify-content: center; gap: 4px; border-right: 1px solid #bfbfc3; }
.star-count { width: 33px; text-align: center; line-height: 30px; }
.kebab { width: 16px; height: 16px; margin-left: 16px; }

.columns { display: grid; grid-template-columns: 654px 274px; column-gap: 40px; margin-top: 16px; }
.col-left, .col-right { min-width: 0; }

.ref-row { display: flex; align-items: center; height: 32px; }
.btn {
  height: 32px;
  border: 1px solid #bfbfc3;
  border-radius: 4px;
  display: inline-flex;
  align-items: center;
  justify-content: center;
  background: #fff;
}
.branch-btn { width: 97px; gap: 4px; }
.branch-btn .mono { margin-left: 1px; padding-top: 2px; }
.small-chev { width: 14px; height: 14px; margin-left: 3px; }
.ref-name { margin-left: 17.5px; font-weight: 600; }
.find-btn { width: 78px; margin-left: auto; }
.code-btn { width: 77px; margin-left: 9px; padding-left: 3px; background: #1f75cb; border-color: #1f75cb; color: #fff; gap: 2px; }

.commit-box {
  margin-top: 16px;
  height: 66px;
  background: #fbfafd;
  border: 1px solid #dcdcde;
  border-radius: 4px;
  padding: 0 16px;
  display: flex;
  align-items: center;
}
.commit-avatar { width: 32px; height: 32px; flex: none; }
.commit-text { margin-left: 8px; padding-top: 2px; }
.commit-title { font-weight: 600; line-height: 18px; }
.commit-sub { font-size: 12px; color: #626168; line-height: 18px; margin-top: 2px; }
.status {
  margin-left: auto;
  width: 24px;
  height: 24px;
  border-radius: 50%;
  background: #f5d9a8;
  display: flex;
  align-items: center;
  justify-content: center;
}
.status-bars { width: 16px; height: 16px; border-radius: 50%; background: #ab6100; position: relative; }
.status-bars::before {
  content: "";
  position: absolute;
  left: 5px; top: 5px;
  width: 6px; height: 6px;
  border-left: 2px solid #fff;
  border-right: 2px solid #fff;
}
.sha-group { margin-left: 24px; height: 32px; display: flex; border: 1px solid #bfbfc3; border-radius: 4px; background: #fff; }
.sha { width: 93px; border-right: 1px solid #bfbfc3; text-align: center; line-height: 32px; }
.sha-copy { width: 30px; display: flex; align-items: center; justify-content: center; }
.history-btn { width: 73px; margin-left: 8px; }

.file-box { margin-top: 16px; border: 1px solid #dcdcde; border-radius: 4px; overflow: hidden; }
.files { width: 652px; table-layout: fixed; border-collapse: separate; border-spacing: 0; }
.col-name { width: 217px; }
.col-commit { width: 270px; }
.files th, .files td { height: 42px; padding: 0 16px; border-bottom: 1px solid #dcdcde; text-align: left; white-space: nowrap; }
.files th { font-weight: 600; letter-spacing: .03px; }
.files tr:last-child td { border-bottom: 0; height: 41px; }
.files .right { text-align: right; }
.muted { color: #68676e; }
.fname { display: flex; align-items: center; gap: 4px; color: #3a383f; }

.readme { margin-top: 16px; border: 1px solid #dcdcde; border-bottom: 0; border-radius: 4px 4px 0 0; }
.readme-head {
  height: 42px;
  background: #fbfafd;
  border-bottom: 1px solid #dcdcde;
  display: flex;
  align-items: center;
  gap: 4px;
  padding-left: 16px;
}
.readme-head strong { font-weight: 600; }
.readme-body { padding: 34px 32px 32px 31.5px; }
.readme-body h2 { margin: 0; font-size: 23.45px; line-height: 30px; font-weight: 600; color: #1f1e24; }

.info-title { margin: 5px 0 0; font-size: 14px; line-height: 20px; font-weight: 600; color: #1f1e24; }
.lang-bar { margin-top: 8px; height: 8px; display: flex; gap: 2px; border-radius: 4px; overflow: hidden; }
.lang-a { width: 155px; background: #00acd8; }
.lang-b { flex: 1; background: #3b4e56; }
.rule { border: 0; border-top: 1px solid #ececef; margin: 0; }
.rule-first { margin-top: 16px; }
.rule-mid { margin-top: 9px; }
.rule-low { margin-top: 16px; }
.stat { height: 32px; display: flex; align-items: center; gap: 8px; }
.stat b { font-weight: 600; }
.stat-first { margin-top: 12px; }
.stat-last { margin-top: 1px; }
.readme-link { height: 20px; margin-top: 17px; }
.devops {
  display: block;
  width: 166px;
  height: 34px;
  margin-top: 7px;
  border: 1px solid #dcdcde;
  border-radius: 4px;
  background: #fbfafd;
  color: #737278;
  text-align: center;
  line-height: 34px;
}
.created-label { margin-top: 13px; line-height: 20px; font-weight: 600; color: #1f1e24; }
.created-date { margin-top: 3px; line-height: 20px; }
```
